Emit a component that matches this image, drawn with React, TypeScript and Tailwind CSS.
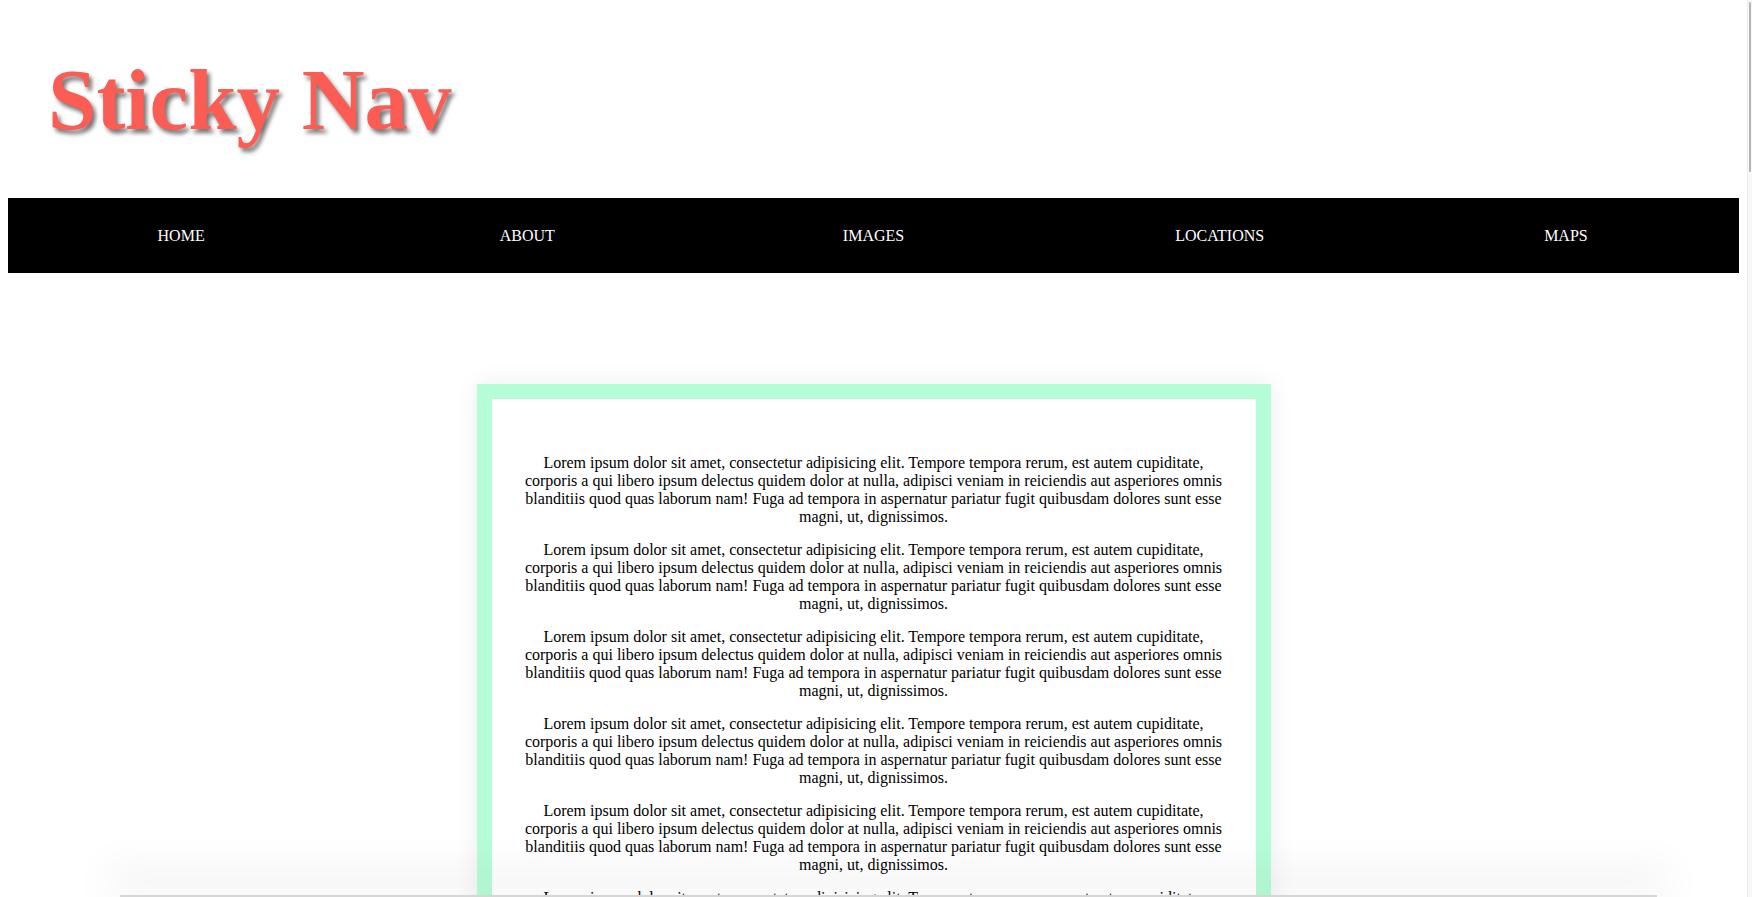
const links = ["HOME", "ABOUT", "IMAGES", "LOCATIONS", "MAPS"];

const lorem =
  "Lorem ipsum dolor sit amet, consectetur adipisicing elit. Tempore tempora rerum, est autem cupiditate, corporis a qui libero ipsum delectus quidem dolor at nulla, adipisci veniam in reiciendis aut asperiores omnis blanditiis quod quas laborum nam! Fuga ad tempora in aspernatur pariatur fugit quibusdam dolores sunt esse magni, ut, dignissimos.";

export default function App() {
  return (
    <div className="relative flex h-screen w-full overflow-hidden bg-white font-['Liberation_Serif',serif] text-black">
      <div className="min-w-0 flex-1 overflow-hidden px-[8px]">
        <header className="flex h-[198px] items-center pl-[40px]">
          <h1 className="text-[87px] font-bold leading-none text-[#fb5c53] [text-shadow:3px_4px_4px_rgba(0,0,0,0.55)]">
            Sticky Nav
          </h1>
        </header>

        <nav className="flex h-[75px] items-center bg-black">
          {links.map((l) => (
            <a key={l} href="#" className="flex-1 text-center text-[16px] text-white">
              {l}
            </a>
          ))}
        </nav>

        <main className="flex justify-center pt-[111px]">
          <div className="w-[794px] border-[15px] border-[#b5fdd6] bg-white shadow-[0_0_24px_rgba(0,0,0,0.07)]">
            <div className="px-[32px] pt-[40px] pb-[40px] text-center text-[16px] leading-[18px]">
              {Array.from({ length: 10 }).map((_, i) => (
                <p key={i} className="my-[15px]">
                  {lorem}
                </p>
              ))}
            </div>
          </div>
        </main>
      </div>

      {/* scrollbar */}
      <div className="w-[5px] shrink-0 border-l border-[#ececec] bg-[#f7f7f7]">
        <div className="ml-[1px] mt-[2px] h-[170px] w-[2px] rounded-full bg-[#b4b4b4]" />
      </div>

      {/* window shadow at the bottom edge */}
      <div className="pointer-events-none absolute bottom-0 left-[120px] right-[95px] h-[2px] bg-[#d6d6d6] shadow-[0_-14px_40px_14px_rgba(0,0,0,0.05)]" />
    </div>
  );
}
